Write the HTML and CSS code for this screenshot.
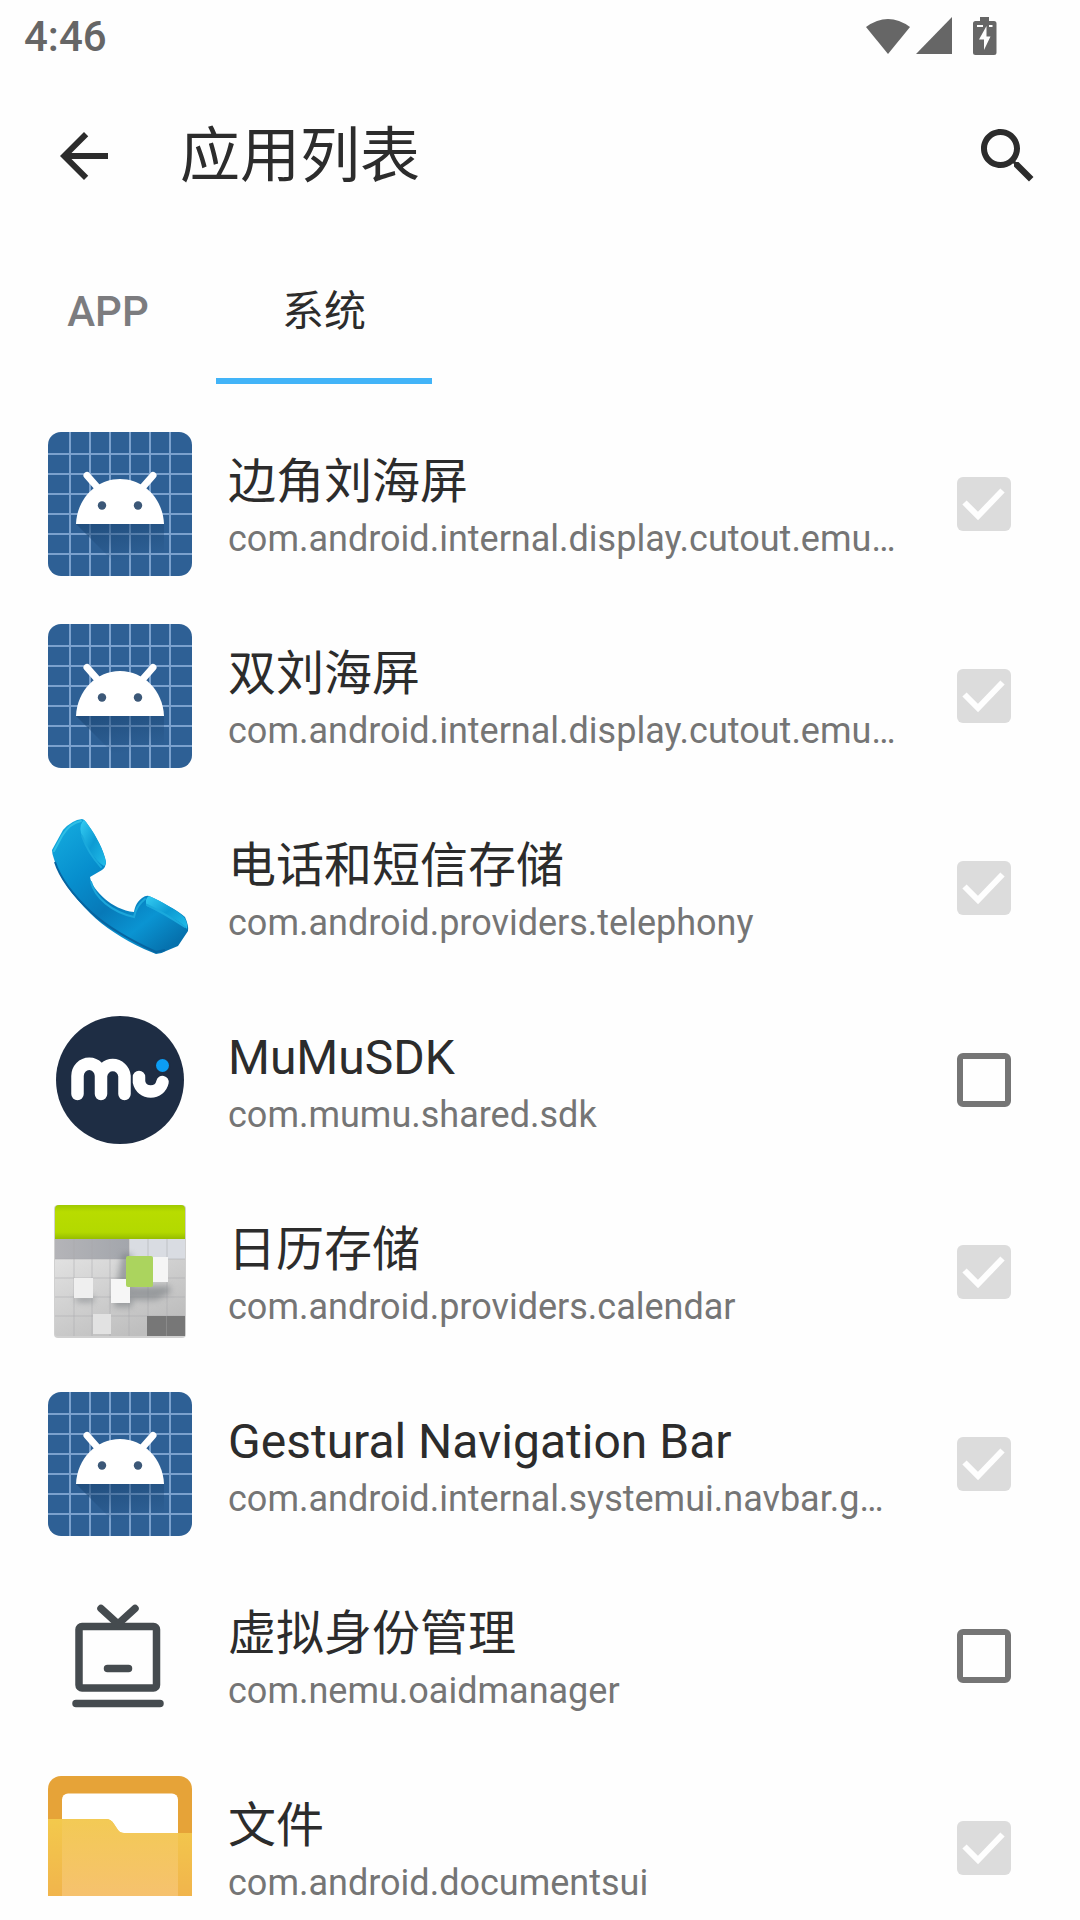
FILE: index.html
```html
<!DOCTYPE html>
<html lang="zh-CN">
<head>
  <meta charset="UTF-8">
  <meta name="viewport" content="width=device-width, initial-scale=1.0">
  <title>应用列表</title>
  <link rel="stylesheet" href="styles.css">
</head>
<body>
  <!-- shared icons -->
  <svg class="sprite" width="0" height="0" aria-hidden="true">
    <defs>
      <linearGradient id="robot-shadow" x1="0" y1="0" x2="0.3" y2="1">
        <stop offset="0" stop-color="#1b4674" stop-opacity="0.7"/>
        <stop offset="0.8" stop-color="#1b4674" stop-opacity="0"/>
      </linearGradient>
    </defs>
    <symbol id="icon-android" viewBox="0 0 144 144">
      <rect width="144" height="144" rx="13" fill="#2e6095"/>
      <path d="M22 0V144M42 0V144M62 0V144M82 0V144M102 0V144M122 0V144M0 22H144M0 42H144M0 62H144M0 82H144M0 102H144M0 122H144" stroke="#7ba1cd" stroke-width="2"/>
      <path d="M28 92H116V144H80Z" fill="url(#robot-shadow)"/>
      <path d="M39 43.500L50 56M105 43.500L94 56" stroke="#fff" stroke-width="7" stroke-linecap="round"/>
      <path d="M28 92C29 67 48 47 72 47S115 67 116 92Z" fill="#fff"/>
      <circle cx="54" cy="73.500" r="4.200" fill="#3c5878"/>
      <circle cx="90" cy="73.500" r="4.200" fill="#3c5878"/>
    </symbol>
  </svg>

  <header class="status-bar">
    <span class="clock">4:46</span>
    <div class="status-icons">
      <svg width="44" height="38" viewBox="0 0 44 38"><path d="M0 10Q22 -6 44 10L22 37Z"/></svg>
      <svg width="36" height="38" viewBox="0 0 36 38"><path d="M36 0V37H0Z"/></svg>
      <svg class="battery" width="24" height="38" viewBox="0 0 24 38">
        <path d="M7 0H16V4H21Q23.500 4 23.500 6.500V35.500Q23.500 38 21 38H2.500Q0 38 0 35.500V6.500Q0 4 2.500 4H7Z"/>
        <path fill="#fefefe" d="M4 8H10V10H4ZM16 8H19.500V10H16ZM13.500 9L6 22.500H11V33L17.500 19.500H13.500Z"/>
      </svg>
    </div>
  </header>

  <div class="toolbar">
    <button class="icon-button" aria-label="返回">
      <svg width="72" height="72" viewBox="0 0 24 24"><path d="M20 11H7.830l5.590-5.590L12 4l-8 8 8 8 1.410-1.410L7.830 13H20v-2z"/></svg>
    </button>
    <h1>应用列表</h1>
    <button class="icon-button" aria-label="搜索">
      <svg width="72" height="72" viewBox="0 0 24 24"><path d="M15.500 14h-.79l-.28-.27C15.410 12.590 16 11.110 16 9.500 16 5.910 13.090 3 9.500 3S3 5.910 3 9.500 5.910 16 9.500 16c1.610 0 3.090-.59 4.230-1.570l.27.28v.79l5 4.990L20.490 19l-4.990-5zm-6 0C7.010 14 5 11.990 5 9.500S7.010 5 9.500 5 14 7.010 14 9.500 11.990 14 9.500 14z"/></svg>
    </button>
  </div>

  <nav class="tabs">
    <button class="tab">APP</button>
    <button class="tab active">系统</button>
  </nav>

  <main class="app-list">
    <label class="app-row">
      <svg class="app-icon"><use href="#icon-android"/></svg>
      <span class="app-text">
        <span class="app-name">边角刘海屏</span>
        <span class="app-package">com.android.internal.display.cutout.emulation.corner</span>
      </span>
      <span class="check"><input type="checkbox" checked disabled></span>
    </label>

    <label class="app-row">
      <svg class="app-icon"><use href="#icon-android"/></svg>
      <span class="app-text">
        <span class="app-name">双刘海屏</span>
        <span class="app-package">com.android.internal.display.cutout.emulation.double</span>
      </span>
      <span class="check"><input type="checkbox" checked disabled></span>
    </label>

    <label class="app-row">
      <svg class="app-icon" viewBox="0 0 144 144">
        <defs>
          <linearGradient id="phone" x1="0" y1="0" x2="0.8" y2="1">
            <stop offset="0" stop-color="#16aee0"/>
            <stop offset="0.35" stop-color="#078fce"/>
            <stop offset="0.6" stop-color="#0779b8"/>
            <stop offset="0.8" stop-color="#0a94d2"/>
            <stop offset="1" stop-color="#0671ad"/>
          </linearGradient>
          <linearGradient id="phone-end" x1="0" y1="0" x2="1" y2="1">
            <stop offset="0" stop-color="#35cdf3"/>
            <stop offset="0.5" stop-color="#0d9bd3"/>
            <stop offset="1" stop-color="#22bde9"/>
          </linearGradient>
        </defs>
        <path d="M34 3Q24 4 15 14L4 34Q4 38 6 43C11 62 25 80 42 97C56 111 75 123 96 133L108 138Q113 138 118 135L130 130L140 115Q141 110 137 101C129 94 114 86 101 80Q98 79 94 82C88 87 87 91 86 96C75 95 64 89 57 83C49 76 43 68 42 61L54 54Q58 51 58 46C56 34 48 20 38 6Q36 3 34 3Z" fill="url(#phone)"/>
        <path d="M36 4Q31 8 33 17C38 30 46 44 56 50Q59 48 57 42C53 29 46 16 38 6Z" fill="url(#phone-end)"/>
        <path d="M101 80Q96 83 99 90L128 104Q136 109 139 113Q140 107 136 101C127 93 113 85 101 80Z" fill="url(#phone-end)"/>
        <path d="M33 5Q22 7 14 20L6 35" fill="none" stroke="#2fbfe6" stroke-width="2" stroke-linecap="round"/>
        <path d="M34 20Q40 37 53 51M99 89Q116 97 137 111" fill="none" stroke="#1aa9dc" stroke-width="2" stroke-linecap="round"/>
        <path d="M43 66C47 82 64 96 86 101Q88 90 97 83" fill="none" stroke="#1ca6da" stroke-width="2" stroke-linecap="round"/>
        <path d="M7 46C13 65 28 82 44 97C62 113 84 125 108 136L117 134" fill="none" stroke="#0764a0" stroke-width="2"/>
      </svg>
      <span class="app-text">
        <span class="app-name">电话和短信存储</span>
        <span class="app-package">com.android.providers.telephony</span>
      </span>
      <span class="check"><input type="checkbox" checked disabled></span>
    </label>

    <label class="app-row">
      <svg class="app-icon" viewBox="0 0 144 144">
        <circle cx="72" cy="72" r="64" fill="#1e2d44"/>
        <path d="M29.500 86V68A11.500 12 0 0 1 53 68V86M53 68A11.800 12 0 0 1 76.500 68V86M91 69V74A12 12 0 0 0 114.500 74" fill="none" stroke="#fff" stroke-width="12.500" stroke-linecap="round"/>
        <circle cx="114.500" cy="57.500" r="8" fill="#1e2d44"/>
        <circle cx="114.500" cy="57.500" r="6.500" fill="#0c9df4"/>
      </svg>
      <span class="app-text">
        <span class="app-name">MuMuSDK</span>
        <span class="app-package">com.mumu.shared.sdk</span>
      </span>
      <span class="check"><input type="checkbox"></span>
    </label>

    <label class="app-row">
      <svg class="app-icon" viewBox="0 0 144 144">
        <defs>
          <linearGradient id="cal-top" x1="0" y1="0" x2="0" y2="1">
            <stop offset="0" stop-color="#9fc900"/>
            <stop offset="0.2" stop-color="#b8dc00"/>
            <stop offset="0.8" stop-color="#b3d900"/>
            <stop offset="1" stop-color="#96bd00"/>
          </linearGradient>
          <linearGradient id="cal-body" x1="0" y1="0" x2="0.6" y2="1">
            <stop offset="0" stop-color="#e8e8e8"/>
            <stop offset="1" stop-color="#bebebe"/>
          </linearGradient>
          <linearGradient id="cal-band" x1="0" y1="0" x2="1" y2="0">
            <stop offset="0" stop-color="#b4b4b8"/>
            <stop offset="1" stop-color="#a3a6ac"/>
          </linearGradient>
          <filter id="cal-blur"><feGaussianBlur stdDeviation="3"/></filter>
        </defs>
        <rect x="6" y="5" width="132" height="133" rx="4" fill="#d0d0d0"/>
        <rect x="7" y="37" width="130" height="99" rx="2" fill="url(#cal-body)"/>
        <rect x="7" y="39" width="74" height="20" fill="url(#cal-band)"/>
        <rect x="82" y="39" width="55" height="20" fill="#d9dce2"/>
        <path d="M26 39V136M44 39V136M62 39V136M81 39V136M100 39V136M119 39V136M7 59H137M7 78H137M7 97H137M7 116H137" stroke="#a9a9ac" stroke-opacity="0.5"/>
        <path d="M7 39V9Q7 5 11 5H133Q137 5 137 9V39Z" fill="url(#cal-top)"/>
        <path d="M74 54H84V86H122V93L108 100H84V107H66V100ZM27 96H46V102H29Z" fill="#777b80" opacity="0.6" filter="url(#cal-blur)"/>
        <rect x="26" y="78" width="19" height="20" fill="#efefef"/>
        <rect x="63" y="79" width="19" height="24" fill="#f6f6f6"/>
        <rect x="45" y="114" width="18" height="20" fill="#e2e2e2"/>
        <rect x="105" y="57" width="15" height="25" fill="#f5f5f5"/>
        <rect x="78" y="56" width="27" height="31" rx="2" fill="#abd45e"/>
        <path d="M99 116H137V136H99Z" fill="#777"/>
        <path d="M118.500 116V136" stroke="#8a8a8a"/>
      </svg>
      <span class="app-text">
        <span class="app-name">日历存储</span>
        <span class="app-package">com.android.providers.calendar</span>
      </span>
      <span class="check"><input type="checkbox" checked disabled></span>
    </label>

    <label class="app-row">
      <svg class="app-icon"><use href="#icon-android"/></svg>
      <span class="app-text">
        <span class="app-name">Gestural Navigation Bar</span>
        <span class="app-package">com.android.internal.systemui.navbar.gestural</span>
      </span>
      <span class="check"><input type="checkbox" checked disabled></span>
    </label>

    <label class="app-row">
      <svg class="app-icon" viewBox="0 0 144 144" fill="none" stroke="#454b4f" stroke-width="7.500" stroke-linecap="round" stroke-linejoin="round">
        <rect x="31" y="42.500" width="77.500" height="61.500" rx="3"/>
        <path d="M53 24.500L70 40L87 24.500M59.500 84.500H80.500M28 119.500H112"/>
      </svg>
      <span class="app-text">
        <span class="app-name">虚拟身份管理</span>
        <span class="app-package">com.nemu.oaidmanager</span>
      </span>
      <span class="check"><input type="checkbox"></span>
    </label>

    <label class="app-row">
      <svg class="app-icon" viewBox="0 0 144 144">
        <defs>
          <linearGradient id="folder" x1="0" y1="0" x2="0" y2="1">
            <stop offset="0" stop-color="#f3c94c"/>
            <stop offset="1" stop-color="#f0ae4c"/>
          </linearGradient>
          <linearGradient id="folder-front" x1="0" y1="0" x2="0" y2="1">
            <stop offset="0" stop-color="#f3ca55"/>
            <stop offset="1" stop-color="#f7bf76"/>
          </linearGradient>
        </defs>
        <rect width="144" height="144" rx="13" fill="#e6a338"/>
        <rect x="14" y="17.500" width="116" height="100" rx="6" fill="#fff"/>
        <path d="M0 43H58Q63 43 66 48L70 54Q72 57 76 57H144V131Q144 144 131 144H13Q0 144 0 131Z" fill="url(#folder)"/>
        <path d="M14 43H58Q63 43 66 48L70 54Q72 57 76 57H130V144H14Z" fill="url(#folder-front)"/>
      </svg>
      <span class="app-text">
        <span class="app-name">文件</span>
        <span class="app-package">com.android.documentsui</span>
      </span>
      <span class="check"><input type="checkbox" checked disabled></span>
    </label>
  </main>
</body>
</html>
```
FILE: styles.css
```css
* {
  box-sizing: border-box;
}

body {
  display: flex;
  flex-direction: column;
  height: 100vh;
  margin: 0;
  padding-bottom: 24px;
  background-color: #fefefe;
  color: #2c2c2c;
  font-family: Roboto, "Noto Sans CJK SC", sans-serif;
}

svg {
  display: block;
  flex: none;
}

.sprite {
  position: absolute;
}

button {
  border: none;
  padding: 0;
  background: none;
  color: inherit;
  font-family: inherit;
  cursor: pointer;
}

/* status bar */
.status-bar {
  display: flex;
  flex: none;
  align-items: center;
  justify-content: space-between;
  height: 72px;
  padding: 2px 83px 0 24px;
  color: #666;
}

.clock {
  font-size: 42px;
  font-weight: 500;
  line-height: 48px;
}

.status-icons {
  display: flex;
  gap: 6px;
  padding-bottom: 2px;
  fill: #666;
}

.battery {
  margin-left: 15px;
}

/* toolbar */
.toolbar {
  display: flex;
  flex: none;
  align-items: center;
  height: 168px;
  padding: 0 36px 0 48px;
}

.toolbar h1 {
  flex: 1;
  margin: 0 0 0 60px;
  padding-top: 2px;
  font-size: 60px;
  font-weight: 400;
  line-height: 72px;
}

.icon-button {
  fill: #2c2c2c;
}

/* tabs */
.tabs {
  display: flex;
  flex: none;
  height: 144px;
}

.tab {
  width: 216px;
  border-top: 6px solid transparent;
  border-bottom: 6px solid transparent;
  color: #7c7c7f;
  font-size: 42px;
  font-weight: 500;
  line-height: 48px;
}

.tab.active {
  border-bottom-color: #42b4f8;
  color: #2c2c2c;
  font-weight: 400;
}

/* app list */
.app-list {
  flex: 1;
  min-height: 0;
  padding-top: 24px;
  overflow: hidden;
}

.app-row {
  display: flex;
  align-items: center;
  height: 192px;
  padding: 0 48px;
  gap: 36px;
}

.app-icon {
  width: 144px;
  height: 144px;
}

.app-text {
  display: flex;
  flex: 1;
  flex-direction: column;
  min-width: 0;
}

.app-name,
.app-package {
  overflow: hidden;
  text-overflow: ellipsis;
  white-space: nowrap;
}

.app-name {
  font-size: 48px;
  line-height: 70px;
}

.app-package {
  color: #757575;
  font-size: 36px;
  line-height: 44px;
}

.check {
  display: flex;
  flex: none;
  justify-content: center;
  width: 96px;
}

.check input {
  appearance: none;
  width: 54px;
  height: 54px;
  margin: 0;
  border: 6px solid #757575;
  border-radius: 6px;
}

.check input:checked {
  border: none;
  background: #dcdcdc url("data:image/svg+xml,%3Csvg xmlns='http://www.w3.org/2000/svg' viewBox='0 0 54 54'%3E%3Cpath d='M7.500 25.500L21 39L45.500 13.500' fill='none' stroke='%23fefefe' stroke-width='6'/%3E%3C/svg%3E");
}
```
